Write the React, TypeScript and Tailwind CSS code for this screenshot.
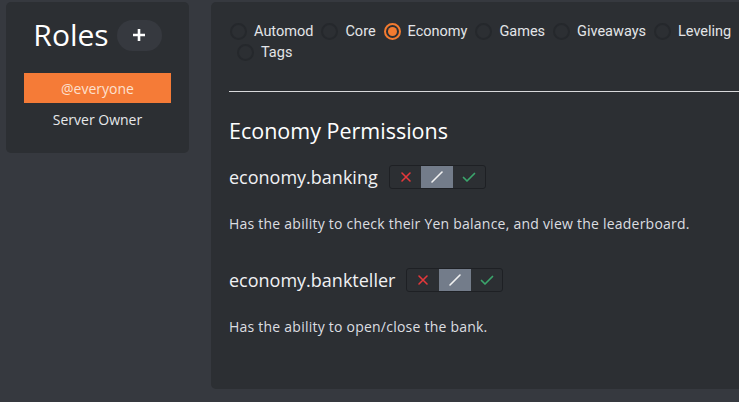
import React from "react";

const raleway = { fontFamily: '"Open Sans", "Lato", sans-serif' };

function Radio({ label, checked }: { label: string; checked?: boolean }) {
  return (
    <label className="flex items-center gap-[7px] h-[21px]">
      <span
        className={
          "w-[17px] h-[17px] rounded-full border-2 flex items-center justify-center " +
          (checked ? "border-[#f47b30]" : "border-[#25282c]")
        }
      >
        {checked && <span className="w-[9px] h-[9px] rounded-full bg-[#f47b30]" />}
      </span>
      <span className="text-[14.5px] text-[#e3e5e8] font-['Roboto',sans-serif]">{label}</span>
    </label>
  );
}

function Toggle() {
  return (
    <div className="flex h-[24px] w-[97px] rounded-[3px] border border-[#1e2024] overflow-hidden">
      <div className="flex-1 flex items-center justify-center">
        <svg width="12" height="12" viewBox="0 0 12 12">
          <path d="M2 2 L10 10 M10 2 L2 10" stroke="#e5383b" strokeWidth="1.6" strokeLinecap="round" />
        </svg>
      </div>
      <div className="flex-1 flex items-center justify-center bg-[#737c8a]">
        <svg width="14" height="14" viewBox="0 0 14 14">
          <path d="M2 12 L12 2" stroke="#f2f2f2" strokeWidth="1.6" strokeLinecap="round" />
        </svg>
      </div>
      <div className="flex-1 flex items-center justify-center">
        <svg width="14" height="12" viewBox="0 0 14 12">
          <path d="M1.5 6.5 L5 10 L12.5 2.5" stroke="#3ba56c" strokeWidth="1.7" fill="none" strokeLinecap="round" strokeLinejoin="round" />
        </svg>
      </div>
    </div>
  );
}

function Perm({ name, desc }: { name: string; desc: string }) {
  return (
    <div>
      <div className="flex items-center gap-[11px] h-[24px]">
        <span className="text-[18px] text-[#f0f1f3]" style={raleway}>{name}</span>
        <Toggle />
      </div>
      <p className="mt-[24px] text-[14px] tracking-[0.23px] text-[#dcdee1]" style={raleway}>{desc}</p>
    </div>
  );
}

export default function App() {
  return (
    <div className="min-h-screen w-full overflow-hidden bg-[#36393f] flex items-start gap-[22px] pl-[6px] pt-[2px]">
      <div className="w-[183px] h-[151px] shrink-0 rounded-[5px] bg-[#2c2f33] px-[18px] pt-[17px]">
        <div className="flex items-center justify-center gap-[8px]">
          <span className="text-[30px] leading-[32px] text-white font-medium" style={raleway}>Roles</span>
          <span className="w-[45px] h-[31px] rounded-full bg-[#36393f] flex items-center justify-center">
            <svg width="14" height="14" viewBox="0 0 14 14">
              <path d="M7 1 V13 M1 7 H13" stroke="white" strokeWidth="2.6" />
            </svg>
          </span>
        </div>
        <div className="mt-[22px] h-[30px] bg-[#f57b37] flex items-center justify-center text-[14px] text-[#fde0cf]" style={raleway}>
          @everyone
        </div>
        <div className="mt-[6px] text-center text-[14px] text-[#e6e8ea]" style={raleway}>Server Owner</div>
      </div>

      <div className="flex-1 min-w-[560px] h-[387px] rounded-l-[5px] bg-[#2c2f33] pl-[18px] pt-[19px]">
        <div className="flex flex-wrap gap-x-[8px] pl-[1px]">
          <Radio label="Automod" />
          <Radio label="Core" />
          <Radio label="Economy" checked />
          <Radio label="Games" />
          <Radio label="Giveaways" />
          <Radio label="Leveling" />
          <div className="ml-[7px]">
            <Radio label="Tags" />
          </div>
        </div>
        <div className="mt-[28px] h-px bg-[#d8d9db]" />
        <h2 className="mt-[24px] text-[21.5px] leading-[30px] text-white font-medium" style={raleway}>Economy Permissions</h2>
        <div className="mt-[19px]">
          <Perm name="economy.banking" desc="Has the ability to check their Yen balance, and view the leaderboard." />
        </div>
        <div className="mt-[34px]">
          <Perm name="economy.bankteller" desc="Has the ability to open/close the bank." />
        </div>
      </div>
    </div>
  );
}
